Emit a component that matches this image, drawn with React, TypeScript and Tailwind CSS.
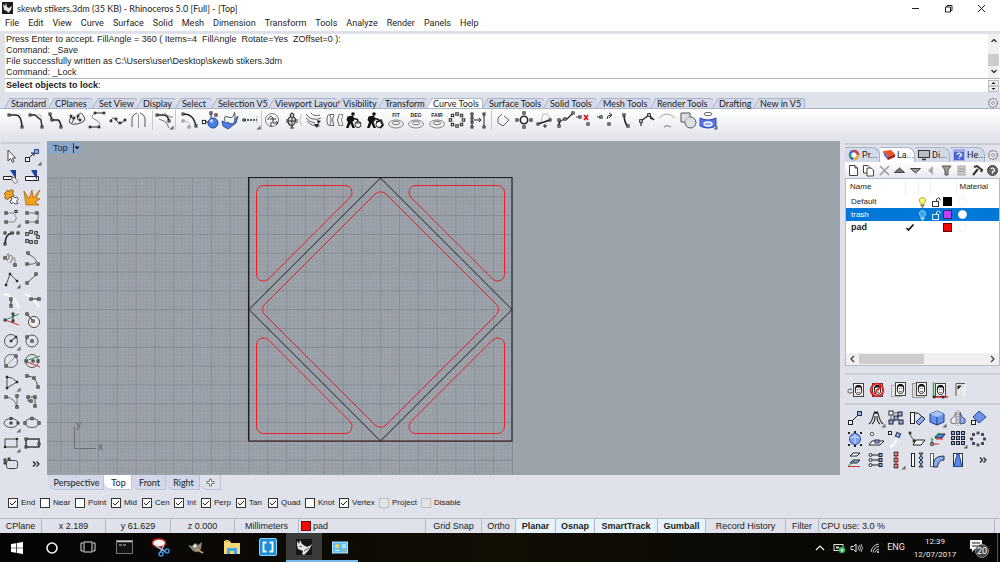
import { useState } from "react";
import type { ReactNode } from "react";

const INK = "#222222";

function P({ d, s = INK, w = 1, f = "none", dash }: { d: string; s?: string; w?: number; f?: string; dash?: string }) {
  return <path d={d} stroke={s} strokeWidth={w} fill={f} strokeDasharray={dash} strokeLinejoin="round" />;
}

function N({ at, s = INK, f = "#ffffff", r = 1.4 }: { at: number[][]; s?: string; f?: string; r?: number }) {
  return (
    <>
      {at.map(([x, y]) => (
        <rect key={x + "," + y} x={x - r} y={y - r} width={r * 2} height={r * 2} fill={f} stroke={s} strokeWidth={1} />
      ))}
    </>
  );
}

const Corner = () => <path d="M19.5 15.5V19.5H15.5Z" fill="#666" />;
const BLUE = "#8fa9f2";

function Walker({ seat }: { seat: boolean }) {
  return (
    <>
      <circle cx="9" cy="4" r="1.800" fill="#111" />
      <path d="M3.500 6.500 9 5.500 10.500 10 8.500 12 11 18H8.500L6.500 13.500 4.500 18H2L4 12 2.500 10Z" fill="#111" />
      <P d="M8 8 13.500 9.500 14 12" w={1.4} s="#111" />
      <circle cx="14" cy="14.500" r="3" fill="#fff" stroke="#222" />
      <P d={seat ? "M11 12 16 10 18 15 15 18" : "M12 13H17"} w={seat ? 1.8 : 1} />
    </>
  );
}

function Disc({ label }: { label: string }) {
  return (
    <>
      <text x="10" y="7" textAnchor="middle" className="fill-neutral-800 font-['Liberation_Sans'] text-[5px] font-bold">
        {label}
      </text>
      <ellipse cx="10" cy="14" rx="7.500" ry="4" fill="#e8eaee" stroke="#888" />
      <ellipse cx="10" cy="13" rx="3.500" ry="1.600" fill="#fff" stroke="#777" />
    </>
  );
}

type Tool = { name: string; art: ReactNode };

const curveA: Tool[] = [
  { name: "Fillet curves", art: <><P d="M4 5H11Q16 5 17 16" w={1.6} /><N at={[[4, 5], [17, 17]]} r={1} /></> },
  { name: "Chamfer curves", art: <><P d="M3 5H9L15 10 16 17" w={1.4} /><P d="M10 5H15V9" s="#aaa" w={0.7} /><N at={[[4, 5], [16, 17]]} r={1} /></> },
  { name: "Connect curves", art: <><P d="M4 4 6 10H12Q14 11 15 16" w={1.5} /><N at={[[4, 4], [6, 10], [15, 17]]} r={1} /></> },
  { name: "Blend curves", art: <><P d="M4 7Q1 11 3 13T10 14 17 11 16 5 11 6 13 9M4 7Q8 9 5 13" s="#444" /><N at={[[4, 6], [7, 8], [11, 6], [13, 10]]} r={0.8} /></> },
  { name: "Adjustable blend", art: <><P d="M8 3H17M3 17H12" /><P d="M8 3Q2 7 8 9.500T12 17" s="#888" /><N at={[[8, 3], [17, 3], [3, 17], [12, 17]]} r={0.8} /></> },
  { name: "Arc blend", art: <><P d="M3 10Q6 6 8 10T13 13 17 9" s="#444" /><N at={[[3, 11], [8, 9], [12, 13], [17, 10]]} r={0.8} /></> },
  { name: "Symmetry", art: <><P d="M4 17V8Q5 4 9 3M12 3Q16 4 17 8V17" s="#555" /><P d="M10.500 4V18" s="#999" /></> },
];
const curveB: Tool[] = [
  { name: "Offset curve", art: <><P d="M2 5H9Q14 5 15 11" w={1.6} /><P d="M5 9 12 12 15 18M10 3 16 7H19" s="#777" /><N at={[[3, 5], [15, 11]]} r={1} /><Corner /></> },
];
const curveC: Tool[] = [
  { name: "Offset normal", art: <><P d="M3 4Q15 3 17 17" w={1.4} /><P d="M4 11Q10 10 11 17" s="#999" dash="2 1" /><N at={[[4, 4], [17, 16]]} r={1} /><N at={[[4, 11], [10, 17]]} s="#888" r={1} /></> },
  { name: "Curve from objects", art: <><circle cx="13" cy="13" r="5" fill="#4e7fe0" stroke="#2346a0" /><circle cx="11.500" cy="11" r="1.800" fill="#bcd2ff" /><P d="M3 12H8M11 4V8" /><N at={[[11, 3], [16, 5]]} r={1.1} /><N at={[[4, 12]]} r={1.6} /></> },
  { name: "Curve on surface", art: <><path d="M2 11 7 13Q14 12 18 6L16 13 8 19 3 16Z" fill="#4e7fe0" stroke="#2c4fae" /><P d="M5 11Q3 5 8 7T14 4 15 8 7 12" s="#555" f="#eef2fb" /></> },
  { name: "Extend curve", art: <><P d="M3 10H16" w={1.5} dash="2 1" /><N at={[[3, 10]]} r={1} /><P d="M16 6V14" s="#999" dash="1 1" /><Corner /></> },
];
const curveD: Tool[] = [
  { name: "Revolve curve", art: <><circle cx="10" cy="10" r="6.500" fill="#f4f5f7" stroke="#777" /><P d="M6 10Q8 4 11 8V13M11 13H16M14 11 16 13 14 15M9 12V17M8 9H14" s="#333" /></> },
  { name: "Cross-section", art: <><path d="M9 3Q12 5 10 7 13 8 12.500 11T9 16Q5 15 5 11T8 7Q6 5 9 3Z" fill="#d0d2d6" stroke="#333" strokeWidth="1.200" /><P d="M4 9V13M14 9V13M5 11H13M9 7V18M7 18H11" s="#333" /><P d="M19 4Q15 10 19 16" s="#bbb" /></> },
  { name: "Pull curve", art: <><P d="M3 4Q5 8 10 9T18 8M3 8Q6 12 12 13M4 11Q9 17 17 16M8 3Q11 7 17 5" s="#666" /><path d="M11 14 16 14 14 18ZM14 10 18 11 15 14Z" fill="#222" /></> },
  { name: "Tween curves", art: <><ellipse cx="5" cy="10" rx="2" ry="5.500" fill="none" stroke="#666" /><P d="M6 4.500H10Q7 10 10 15.500H6M15 4.500Q12 10 15 15.500" s="#666" /><P d="M19 4.500Q16 10 19 15.500M15 4.500H19M15 15.500H19" s="#888" /></> },
  { name: "Rebuild curve", art: <Walker seat={false} /> },
  { name: "Rebuild with master", art: <Walker seat /> },
  { name: "Fit curve", art: <Disc label="FIT" /> },
  { name: "Change degree", art: <Disc label="DEG" /> },
  { name: "Fair curve", art: <Disc label="FAIR" /> },
  { name: "Make periodic", art: <N at={[[10, 4], [14.5, 5.5], [16.5, 10], [14.5, 14.5], [10, 16], [5.5, 14.5], [3.5, 10], [5.5, 5.5]]} r={1.2} /> },
  { name: "Simplify curve", art: <><P d="M4 4V17M16 3V17M6 10H13M11 8 13 10 11 12" /><N at={[[4, 4], [4, 8], [4, 12], [4, 17], [16, 4], [16, 17]]} r={1} /></> },
];
const curveE: Tool[] = [
  { name: "Close curve", art: <P d="M9 4 5 8V13L10 16 16 10 11 6" s="#666" /> },
  { name: "Control points", art: <><circle cx="10" cy="10" r="3.700" fill="none" stroke="#222" strokeWidth="1.500" /><N at={[[10, 3], [10, 17], [3, 10], [17, 10]]} r={1.1} /></> },
  { name: "Insert kink", art: <><P d="M7 12 9 4H13L17 9" s="#bbb" /><P d="M4 14 16 10" w={1.6} /><N at={[[4, 14], [16, 10]]} r={1} /><P d="M9 16H13M11 14V18" /></> },
  { name: "Handlebar editor", art: <><P d="M4 16Q4 9 12 9L17 4M4 16V9" w={1.2} /><N at={[[4, 16], [4, 10], [10, 9], [18, 3]]} r={1.1} /></> },
  { name: "Remove knot", art: <><P d="M1 7H4" s="#555" /><P d="M9 5 13 10M13 5 9 10" s="#e01010" w={1.6} /><N at={[[5, 7], [13, 14]]} r={1.1} /></> },
  { name: "Insert knot", art: <><P d="M1 7H4M11 9Q11 5 15 5M13 3 16 5 13 8" s="#333" /><N at={[[5, 7], [13, 14]]} r={1.1} /></> },
  { name: "Line to curve", art: <><P d="M8 4Q8 12 12 17" w={1.6} /><N at={[[8, 5], [12, 16]]} r={1.1} /></> },
  { name: "Polyline edit", art: <><P d="M4 16V11L12 5 17 10" w={1.2} /><N at={[[4, 11], [12, 5]]} r={1.3} /><path d="M13 6 18 10 13 9Z" fill="#333" /></> },
  { name: "Curve arch", art: <><P d="M2 8Q10 0 18 8" s="#aaa" /><P d="M7 17Q10 14 14 17" s="#777" /></> },
  { name: "Curve boolean", art: <><path d="M3 3H12V7A5.500 5.500 0 1 1 7 12H3Z" fill="#dcdfe3" stroke="#555" /><path d="M12 7A5.500 5.500 0 0 0 7 12" fill="none" stroke="#aaa" /></> },
  { name: "Extract isocurve", art: <><ellipse cx="10" cy="4" rx="4" ry="1.600" fill="#fff" stroke="#666" /><path d="M2 8Q10 12 18 8V16Q10 20 2 16Z" fill="#5b78e8" stroke="#2b46b5" /><ellipse cx="10" cy="14" rx="4" ry="2" fill="#8da6f5" stroke="#fff" strokeWidth="1.300" /><Corner /></> },
];

const side: Tool[] = [
  { name: "Select", art: <path d="M7 4V15L9.500 12.500 11.500 16.500 13 15.500 11.500 12H14.500Z" fill="#fff" stroke="#444" /> },
  { name: "Points on", art: <><P d="M7 12 12 7M9 7H12V10" /><rect x="3.500" y="11.500" width="4" height="4" fill="#fff" stroke="#222" /><rect x="12.500" y="3.500" width="4" height="4" fill="#8cb0ee" stroke="#2a4b8f" /><Corner /></> },
  { name: "Trim", art: <><path d="M9 3H15V12Z" fill="#1d3fa0" /><path d="M2.500 9.500H11V12.500H2.500Z" fill="#fff" stroke="#222" /><path d="M10 12 14 16.500 17 14.500 13 10Z" fill="#eee" stroke="#777" /></> },
  { name: "Split", art: <><path d="M3.500 9.500H16.500V13.500H3.500Z" fill="#fff" stroke="#222" /><path d="M9 3H15V13Z" fill="#1d3fa0" /></> },
  { name: "Join", art: <><path d="M5 5 7 3 8.500 5 10 2.500 12.500 4 11.500 7 13 8 11 11 9 10 7 12.500 3.500 11 5 9 3 7Z" fill="#f6a21c" stroke="#94600a" /><path d="M10 10 12 9 13.500 11 16 10 17 12.500 15.500 14 17 16.500 14 17 12.500 15.500 10 16.500 9 14 11 13Z" fill="#fff" stroke="#555" /></> },
  { name: "Explode", art: <path d="M4 18 2 4 7 12 10 3 11 11 18 3 14 11 18 12 13 15 17 18Z" fill="#f6a21c" stroke="#a15a08" strokeWidth="0.700" /> },
  { name: "Control point curve", art: <><P d="M5 5H12Q18 10 13 14H5" s="#888" /><N at={[[5, 5], [15, 3.5], [5, 14]]} r={1.1} /><Corner /></> },
  { name: "Interpolate curve", art: <><P d="M5 5H14M5 14H14Q18 10 15 5" s="#777" /><N at={[[5, 5], [15, 5], [5, 14], [15, 14]]} r={1.1} /></> },
  { name: "Handle curve", art: <><P d="M4 17Q4 6 11 5H13" w={1.5} /><N at={[[4, 5], [11, 5], [17, 5], [4, 16]]} r={1} /></> },
  { name: "Sketch", art: <N at={[[5, 6], [9, 4], [14, 5], [16, 9], [14, 14], [9, 14], [5, 13]]} r={1.3} /> },
  { name: "Helix", art: <><P d="M5 9Q7 2 8 6T6 12Q9 4 11 7T9 14Q13 6 14 10T12 16" s="#888" /><N at={[[4, 9], [14, 16]]} r={1.1} /></> },
  { name: "Conic", art: <><P d="M6 5Q16 10 14 13T5 15" s="#666" /><N at={[[6, 4], [5, 15], [16, 15]]} r={1.1} /></> },
  { name: "Polyline", art: <><P d="M5 16 9 5 16 12" s="#555" /><N at={[[5, 16], [9, 5], [16, 12]]} r={0.7} /><Corner /></> },
  { name: "Line", art: <><P d="M6 13 14 6" s="#555" /><N at={[[5, 14], [14, 5]]} r={1.1} /></> },
  { name: "Perpendicular line", art: <><P d="M3 4Q14 6 18 18" s="#fff" w={2} /><P d="M10 9V16" /><N at={[[10, 9], [10, 16]]} r={1.1} /></> },
  { name: "Tangent line", art: <><P d="M3 4Q10 6 17 17" s="#fff" w={2} /><P d="M8 9H16" /><N at={[[9, 9], [17, 9]]} r={1.1} /></> },
  { name: "Line at angle", art: <><P d="M4 10 18 4" s="#1fa04a" /><P d="M4 10 18 15" s="#e02a2a" /><P d="M12 4V12" /><N at={[[4, 10], [12, 4], [12, 11]]} r={0.9} /></> },
  { name: "Circle with offset", art: <><circle cx="12" cy="12" r="5.500" fill="#f3f4f6" stroke="#444" /><P d="M5 4 10 10" /><N at={[[5, 4], [11, 11]]} r={1.1} /></> },
  { name: "Circle", art: <><circle cx="10" cy="10" r="6.500" fill="none" stroke="#555" /><P d="M10 10 15 6" /><N at={[[10, 10], [15, 6]]} r={0.7} /><Corner /></> },
  { name: "Circle from points", art: <><circle cx="10" cy="10" r="6" fill="none" stroke="#555" /><N at={[[5, 6], [10, 10]]} r={1.1} /></> },
  { name: "Circle diameter", art: <><circle cx="10" cy="10" r="6.500" fill="none" stroke="#666" /><P d="M5 15 15 5" s="#999" /><N at={[[5, 15], [15, 5]]} r={1.1} /></> },
  { name: "Tangent circle", art: <><circle cx="10" cy="10" r="6.500" fill="none" stroke="#555" /><P d="M3 10 18 5" s="#1fa04a" /><P d="M3 10 18 16" s="#e02a2a" /><N at={[[4, 10], [11, 10], [16, 10]]} r={1} /></> },
  { name: "Arc", art: <><P d="M6 17V5Q12 5 16 10L6 16" s="#555" /><N at={[[6, 5], [16, 10], [6, 16]]} r={0.7} /><Corner /></> },
  { name: "Arc through points", art: <><P d="M5 4Q14 4 16 15" s="#555" /><N at={[[5, 4], [12, 6], [16, 15]]} r={1.1} /></> },
  { name: "Tangent arc", art: <><P d="M5 5Q14 6 16 15M16 5V15" s="#777" /><N at={[[5, 5], [16, 4], [16, 15]]} r={1.1} /></> },
  { name: "Rectangle array", art: <><P d="M6 5H13V14M10 9H6V5" s="#555" /><N at={[[6, 5], [13, 5], [9, 9], [13, 14]]} r={1.1} /></> },
  { name: "Ellipse", art: <><ellipse cx="10" cy="10" rx="7" ry="4.500" fill="none" stroke="#555" /><N at={[[10, 5.5], [17, 10], [10, 10]]} r={0.9} /><Corner /></> },
  { name: "Ellipse diameter", art: <><ellipse cx="10" cy="10" rx="7" ry="4.500" fill="none" stroke="#555" /><N at={[[10, 5.5], [3, 10], [17, 10]]} r={1.1} /></> },
  { name: "Rectangle", art: <><rect x="4" y="6" width="12" height="8" fill="none" stroke="#444" /><N at={[[4, 14], [16, 6]]} r={0.6} /><Corner /></> },
  { name: "Rectangle from points", art: <><rect x="4" y="6" width="13" height="8" fill="none" stroke="#222" strokeWidth="1.300" /><N at={[[4, 6], [4, 14], [17, 11]]} r={1} /></> },
  { name: "Rounded rectangle", art: <><rect x="5.500" y="6.500" width="11" height="8" rx="2" fill="none" stroke="#444" /><N at={[[4, 6], [8, 5], [4, 9]]} r={0.9} /></> },
  { name: "More tools", art: <P d="M11 7.500 13.500 10 11 12.500M14.500 7.500 17 10 14.500 12.500" w={1.3} /> },
];

const Face = ({ x = 6, y = 3 }: { x?: number; y?: number }) => (
  <g transform={`translate(${x} ${y})`}>
    <rect x="0.500" y="0.500" width="10" height="13" fill="#f4f4f4" stroke="#444" />
    <ellipse cx="5.500" cy="7" rx="3.200" ry="4.500" fill="#fff" stroke="#222" />
    <path d="M2 7Q1.500 2 5.500 2T9 7L7.500 4.500H3.500Z" fill="#111" />
    <path d="M4.300 6V7M6.700 6V7M4 9Q5.500 10.500 7 9" stroke="#222" strokeWidth="0.800" fill="none" />
  </g>
);
const faces: Tool[] = [
  { name: "Hide", art: <><Face x={7} /><P d="M6 9Q1 9 2 12Q4 14 7 12" s="#888" w={1.3} /></> },
  { name: "Remove", art: <><Face x={5} /><circle cx="10" cy="10" r="6.300" fill="none" stroke="#ee1c1c" strokeWidth="1.800" /><P d="M6 15 15 5" s="#ee1c1c" w={1.8} /></> },
  { name: "Show", art: <><rect x="3.500" y="5.500" width="10" height="11" fill="#e3e5e9" stroke="#aaa" /><Face x={7} y={2} /></> },
  { name: "Show selected", art: <><rect x="3.500" y="3.500" width="12" height="14" fill="#d5d7db" stroke="#999" /><Face x={7} y={2} /></> },
  { name: "Isolate", art: <><Face x={5} /><P d="M3.500 2V17" s="#28b428" w={1.4} /><P d="M4 17H18" s="#e02020" w={1.4} /><N at={[[4, 17], [13, 17]]} r={0.8} /></> },
  { name: "Ghost", art: <><rect x="5" y="3" width="10" height="13" fill="#eceef2" /><P d="M5 16V3.500H14" s="#555" /><path d="M7 15V7Q8 4 12 5L10 9V15Z" fill="#fff" stroke="#ccc" /><P d="M7 6H10L7 9Z" f="#222" /></> },
];

const transforms: Tool[] = [
  { name: "Move", art: <><P d="M7 13 13 7" /><rect x="3.500" y="12.500" width="4" height="4" fill="#fff" stroke="#222" /><rect x="12.500" y="3.500" width="4" height="4" fill={BLUE} stroke="#234" /></> },
  { name: "Bend", art: <><P d="M3 16Q6 14 8 5H12Q14 14 17 16M6 16Q9 14 9 8M14 16Q11 14 11 8" w={1.1} /><P d="M8 4.500H12" w={2} /><Corner /></> },
  { name: "Copy", art: <><P d="M5 8V13H9M8 5H12" s="#555" /><N at={[[5, 5]]} r={2} /><N at={[[14, 6], [15, 14], [10, 10], [5, 14]]} f={BLUE} r={2} /></> },
  { name: "Rotate", art: <><rect x="3.500" y="4.500" width="4" height="11" fill="#fff" stroke="#222" /><path d="M9 14 15 8 18 11 12 17Z" fill={BLUE} stroke="#234" /><P d="M8 5Q12 4 14 8" /></> },
  { name: "Scale", art: <><path d="M3 6 10 3 17 6V14L10 17 3 14Z" fill="#6b92e8" stroke="#1d3a80" /><path d="M3 6 10 3 17 6 10 9Z" fill="#a9c4ff" /><P d="M10 9V17" s="#1d3a80" /><Corner /></> },
  { name: "Mirror", art: <><path d="M8 4V16L3 15V11L6 9Z" fill="#eee" stroke="#777" /><path d="M12 4V16L17 15V11L14 9Z" fill={BLUE} stroke="#456" /><P d="M10 2V18" s="#888" dash="2 1" /></> },
  { name: "Orient", art: <><path d="M11 3 18 9 11 15 5 9Z" fill="#6f93e6" stroke="#234a8f" /><rect x="3.500" y="12.500" width="4" height="4" fill="#fff" stroke="#222" /></> },
  { name: "Cage edit", art: <><circle cx="10" cy="10" r="5.500" fill="#7fa3ee" stroke="#2a4b9f" /><P d="M5 9Q10 6 15 9M10 5V15" s="#d4e1ff" /><N at={[[4, 4], [10, 3], [16, 4], [4, 16], [10, 17], [16, 16]]} r={0.5} /></> },
  { name: "Flow along surface", art: <><circle cx="6" cy="5" r="1.700" fill="#fff" stroke="#555" /><path d="M6 12H18L14 16H3Z" fill="#fff" stroke="#222" /><rect x="9" y="11" width="4" height="3" fill={BLUE} stroke="#234" /></> },
  { name: "Flow along curve", art: <><P d="M4 18Q11 15 12 3" s="#fff" w={2} /><N at={[[4, 4]]} r={1.5} /><rect x="10" y="4" width="4" height="4" fill={BLUE} stroke="#234" transform="rotate(25 12 6)" /></> },
  { name: "Project to plane", art: <><path d="M9 11H18L14 16H6Z" fill="#fff" stroke="#222" /><P d="M3 4Q4 10 8 11M8 11 6 12" s="#444" /><N at={[[3, 4], [7, 12]]} r={0.8} /></> },
  { name: "Remap plane", art: <><path d="M11 5H18L15 9H8Z" fill="#577fe0" stroke="#222" /><P d="M5 15V9M8 8 12 4" s="#1fa04a" w={1.4} /><P d="M5 15H12M9 10H16" s="#e02a2a" w={1.2} /><N at={[[5, 15]]} r={1.2} /></> },
  { name: "Rectangular array", art: <><N at={[[5, 4], [10, 4], [15, 4], [5, 9], [10, 9], [15, 9], [5, 14], [10, 14], [15, 14]]} f={BLUE} r={1.5} /><Corner /></> },
  { name: "Polar array", art: <N at={[[10, 4], [14.5, 5.5], [16.5, 10], [14.5, 14.5], [10, 16], [5.5, 14.5], [3.5, 10], [5.5, 5.5]]} f="#d5e0ff" r={0.9} s="#334" /> },
  { name: "Set plane", art: <><path d="M8 3H15L12 6H5Z" fill="#fff" stroke="#222" /><path d="M8 10H15L12 13H5Z" fill={BLUE} stroke="#222" /><P d="M3 16 11 10" s="#1fa04a" /><P d="M3 16.500H15" s="#e02a2a" /></> },
  { name: "Align points", art: <>{[5, 10, 15].map((y) => <g key={y}><P d={`M5 ${y}H15`} /><circle cx="4.500" cy={y} r="1.500" fill="#fff" stroke="#222" /><rect x="13" y={y - 1.5} width="3" height="3" fill={BLUE} stroke="#222" /></g>)}</> },
  { name: "Align objects", art: <><N at={[[10, 4], [10, 10], [10, 16]]} r={1.8} /><P d="M10 2V18" s="#e02a2a" w={1.3} /><Corner /></> },
  { name: "Twist", art: <><rect x="4.500" y="3.500" width="3" height="13" fill="#fff" stroke="#222" /><path d="M12 3H16L12 8 16 12 12 17H16L12 12 16 8Z" fill={BLUE} stroke="#234" /></> },
  { name: "Pipe bend", art: <><rect x="3.500" y="3.500" width="3" height="13" fill="#fff" stroke="#666" /><path d="M6.500 17V13Q7 6 17 6V10Q11 10 10.500 17Z" fill={BLUE} stroke="#234" /></> },
  { name: "Taper", art: <><rect x="5.500" y="3.500" width="9" height="13" fill="#fff" stroke="#333" /><path d="M9 4H11L14 16.500H6Z" fill="#5b86e8" stroke="#234a9f" /></> },
  { name: "More transforms", art: <P d="M12 7.500 14.500 10 12 12.500M15.500 7.500 18 10 15.500 12.500" w={1.3} /> },
];

function ToolButton({ tool }: { tool: Tool }) {
  return (
    <button type="button" aria-label={tool.name} className="flex h-5 w-5 shrink-0 items-center justify-center">
      <svg width="20" height="20" viewBox="0 0 20 20" aria-hidden="true">{tool.art}</svg>
    </button>
  );
}

function ToolGroup({ tools, width }: { tools: Tool[]; width: string }) {
  return <div className={"flex shrink-0 justify-between " + width}>{tools.map((t) => <ToolButton key={t.name} tool={t} />)}</div>;
}

const Rule = () => <div className="h-5 w-px shrink-0 bg-[#c3c7cf]" />;

const Gear = () => (
  <svg width="12" height="12" viewBox="0 0 12 12" aria-hidden="true">
    <circle cx="6" cy="6" r="4.300" fill="#eceef2" stroke="#8b8e94" strokeWidth="1.600" strokeDasharray="1.900 0.800" />
    <circle cx="6" cy="6" r="1.500" fill="none" stroke="#999" />
  </svg>
);

const menus = ["File", "Edit", "View", "Curve", "Surface", "Solid", "Mesh", "Dimension", "Transform", "Tools", "Analyze", "Render", "Panels", "Help"];

const tabs = [
  ["Standard", "w-[44px]"], ["CPlanes", "w-[44px]"], ["Set View", "w-[44px]"], ["Display", "w-[39px]"],
  ["Select", "w-[36px]"], ["Selection V5", "w-[57px]"], ["Viewport Layout", "w-[68px]"], ["Visibility", "w-[42px]"],
  ["Transform", "w-[48px]"], ["Curve Tools", "w-[56px]"], ["Surface Tools", "w-[61px]"], ["Solid Tools", "w-[53px]"],
  ["Mesh Tools", "w-[54px]"], ["Render Tools", "w-[62px]"], ["Drafting", "w-[41px]"], ["New in V5", "w-[51px]"],
];

function ToolbarTabs() {
  const [active, setActive] = useState("Curve Tools");
  return (
    <div className="flex h-[11px] items-stretch border-b border-[#a9b3c6] pl-[5px] font-['Lato',sans-serif] text-[9px]">
      {tabs.map(([name, width]) => {
        const on = name === active;
        const face = on ? "bg-white border-[#a9b3c6]" : "bg-[#d3d9e8] border-[#a9b3c6]";
        return (
          <button key={name} type="button" onClick={() => setActive(name)} className={"relative flex shrink-0 items-center pl-[6px] text-left " + width}>
            <span className={"absolute inset-y-0 left-[2px] w-2 -skew-x-[30deg] border-t border-l " + face} />
            <span className={"absolute inset-y-0 right-0 left-2 rounded-tr-[3px] border-t " + (on || name === "New in V5" ? "border-r " : "") + face} />
            <span className="relative whitespace-nowrap">{name}</span>
          </button>
        );
      })}
      <button type="button" aria-label="Toolbar options" className="mr-[1px] ml-auto flex items-center"><Gear /></button>
    </div>
  );
}

function Grid() {
  const step = 18.814;
  const lines: ReactNode[] = [];
  for (let i = -54; i <= 70; i++) {
    const x = 249 + (i * step) / 5;
    if (x < 47) continue;
    const major = i % 5 === 0;
    lines.push(<path key={"v" + i} d={`M${x} 178V474`} stroke={major ? "#868c95" : "#959ba4"} strokeWidth={major ? 1 : 0.6} />);
  }
  for (let j = 0; j <= 78; j++) {
    const y = 178 + (j * step) / 5;
    const major = j % 5 === 0;
    lines.push(<path key={"h" + j} d={`M47 ${y}H512`} stroke={major ? "#868c95" : "#959ba4"} strokeWidth={major ? 1 : 0.6} />);
  }
  return <g>{lines}</g>;
}

const WEDGE = "M256.500 192.500A7 7 0 0 1 263.500 185.500H345A7 7 0 0 1 350 197.500L268.500 279A7 7 0 0 1 256.500 274Z";

function Viewport() {
  return (
    <main className="relative min-w-0 flex-1 overflow-hidden bg-[#9da3ab]">
      <svg className="absolute top-0 left-0" width="793" height="333" viewBox="47 141 793 333" role="img" aria-label="Top view drawing">
        <Grid />
        <g fill="none" stroke="#ee1f24" strokeWidth="1">
          <path d={WEDGE} />
          <path d={WEDGE} transform="translate(761 0) scale(-1 1)" />
          <path d={WEDGE} transform="translate(0 619) scale(1 -1)" />
          <path d={WEDGE} transform="translate(761 619) scale(-1 -1)" />
          <path d="M375 194A8 8 0 0 1 386 194L496.500 304.500A8 8 0 0 1 496.500 314.500L386 425A8 8 0 0 1 375 425L264.500 314.500A8 8 0 0 1 264.500 304.500Z" />
        </g>
        <g fill="none" stroke="#1c1e21">
          <path d="M248.500 177.500H512V441H248.500Z" strokeWidth="1.100" />
          <path d="M380.500 178 512 309.500 380.500 441 249 309.500Z" />
          <path d="M249.500 178V440" stroke="#2f5a35" strokeWidth="0.600" />
          <path d="M249 441.500H512" stroke="#6a2226" strokeWidth="0.600" />
        </g>
        <path d="M74.500 427V448.500H96" fill="none" stroke="#6b6f76" />
        <text x="76" y="428" className="fill-[#5f636a] font-['Liberation_Sans'] text-[10px]">y</text>
        <text x="98" y="450" className="fill-[#5f636a] font-['Liberation_Sans'] text-[10px]">x</text>
      </svg>
      <button type="button" className="absolute top-px left-px flex h-3 items-center gap-[5px] bg-[#8ba6c8] pr-px pl-[5px] font-['Liberation_Sans',sans-serif] text-[9px] text-[#1b2a3c]">
        Top
        <svg width="7" height="12" viewBox="0 0 7 12" aria-hidden="true"><path d="M0.500 1V11" stroke="#333" /><path d="M1.500 4.500H6.500L4 7.500Z" fill="#111" /></svg>
      </button>
    </main>
  );
}

const panelTabs: { name: string; on?: boolean; art: ReactNode }[] = [
  { name: "Pr...", art: <><circle cx="6" cy="6" r="4" fill="#fff" stroke="#3a62d8" strokeWidth="2.400" /><path d="M6 2A4 4 0 0 1 10 6" stroke="#e33a2c" strokeWidth="2.400" fill="none" /><path d="M10 6A4 4 0 0 1 5 10" stroke="#f2b72a" strokeWidth="2.400" fill="none" /><path d="M3 8.500A4 4 0 0 1 2 5" stroke="#35a852" strokeWidth="2.400" fill="none" /></> },
  { name: "La...", on: true, art: <><path d="M0 2 8 1 12 5 5 8Z" fill="#ee5522" /><path d="M0 2 5 8V11L1 6Z" fill="#3d63c8" /><path d="M5 8 12 5V8L5 11Z" fill="#a32222" /></> },
  { name: "Di...", art: <><rect x="0.500" y="1.500" width="11" height="7" fill="#b9bfc9" stroke="#333" /><path d="M4 10.500H8" stroke="#333" strokeWidth="1.500" /></> },
  { name: "He...", art: <><rect x="0.500" y="0.500" width="11" height="11" fill="#4a64d4" stroke="#a8b6e8" /><path d="M1 2H11" stroke="#dfe6ff" /><path d="M4 5.500Q6 3 8 5T6 7.500M6 9V10" stroke="#fff" strokeWidth="1.300" fill="none" /></> },
];

const layerTools: Tool[] = [
  { name: "New layer", art: <path d="M2.500 1.500H8L10.500 4V11.500H2.500ZM8 1.500V4H10.500" fill="#fff" stroke="#444" /> },
  { name: "New sublayer", art: <><path d="M1.500 1.500H6L8 3.500V9H1.500Z" fill="#fff" stroke="#444" /><path d="M5 4H9L11.500 6V12H5Z" fill="#fff" stroke="#444" /></> },
  { name: "Delete layer", art: <path d="M2 2 11 11M11 2 2 11" stroke="#999" strokeWidth="1.500" /> },
  { name: "Move up", art: <path d="M6.500 4 11.500 8.500H1.500Z" fill="#777" stroke="#444" /> },
  { name: "Move down", art: <path d="M6.500 9 11.500 4.500H1.500Z" fill="#999" stroke="#444" /> },
  { name: "Move out", art: <path d="M9 2V11L4 6.500Z" fill="#aaa" /> },
  { name: "Filter", art: <path d="M2 2H11L8 6V11H5V6Z" fill="#999" stroke="#555" /> },
  { name: "Properties", art: <><rect x="3" y="2" width="7" height="9" fill="#ccc" stroke="#aaa" /><path d="M4 5H9M4 7.500H9" stroke="#999" /></> },
  { name: "Layer tools", art: <path d="M2 11 7 5M3 3 6 2 11 6 10 8" stroke="#333" strokeWidth="2" fill="none" /> },
  { name: "Help", art: <><circle cx="6.500" cy="6.500" r="5" fill="#666" stroke="#444" /><path d="M5 5Q6.500 3 8 5T6.500 7.500V9.500" stroke="#fff" strokeWidth="1.200" fill="none" /></> },
];

function Bulb({ lit }: { lit: boolean }) {
  return (
    <svg width="9" height="12" viewBox="0 0 9 12" aria-hidden="true">
      <path d="M3 7.500Q1 6 1.500 3.500 2.500 1.500 4.500 1.500T7.500 3.500Q8 6 6 7.500V10H3Z" fill={lit ? "#fff86a" : "#3ba0f0"} stroke={lit ? "#8a862a" : "#bfe0ff"} strokeWidth="0.800" />
      <path d="M3 9H6M3.500 11H5.500" stroke={lit ? "#555" : "#cde"} />
    </svg>
  );
}

function Lock({ color }: { color: string }) {
  return (
    <svg width="10" height="12" viewBox="0 0 10 12" aria-hidden="true">
      <rect x="1.500" y="5.500" width="6" height="5" fill="none" stroke={color} />
      <path d="M5.500 5V3Q7.500 0.500 9 3V4.500" fill="none" stroke={color} />
    </svg>
  );
}

const layers = [
  { name: "Default", swatch: "bg-black", bulb: true, icons: true, current: false, selected: false },
  { name: "trash", swatch: "bg-[#c040f8]", bulb: false, icons: true, current: false, selected: true },
  { name: "pad", swatch: "bg-[#f60505]", bulb: false, icons: false, current: true, selected: false },
];

function Layers() {
  return (
    <div className="flex min-h-0 flex-1 flex-col border border-[#b5bac4] bg-white">
      <table className="w-full table-fixed border-collapse font-['Liberation_Sans',sans-serif] text-[8px]">
        <colgroup>
          <col className="w-[59px]" /><col className="w-[13px]" /><col className="w-[12px]" /><col className="w-[13px]" /><col className="w-[13px]" /><col />
        </colgroup>
        <thead>
          <tr className="h-4 text-left">
            <th className="p-0 pl-[4px] font-normal">Name</th>
            <th className="border-x border-[#eceef0] p-0" /><th className="border-r border-[#eceef0] p-0" /><th className="p-0" />
            <th className="border-r border-[#eceef0] p-0" />
            <th className="p-0 pl-[3px] font-normal">Material</th>
          </tr>
        </thead>
        <tbody>
          {layers.map((l) => (
            <tr key={l.name} className={"h-[13px] leading-none " + (l.selected ? "bg-[#0078d7] text-white" : "")}>
              <td className={"p-0 pl-[5px] " + (l.current ? "text-[9px] font-bold" : "")}>{l.name}</td>
              <td className="p-0">{l.current && <svg width="10" height="9" viewBox="0 0 10 9" aria-label="Current"><path d="M1.500 5 3.500 7 8.500 1.500" fill="none" stroke="#111" strokeWidth="1.600" /></svg>}</td>
              <td className="p-0">{l.icons && <Bulb lit={l.bulb} />}</td>
              <td className="p-0 pl-px">{l.icons && <Lock color={l.selected ? "#dceeff" : "#333333"} />}</td>
              <td className="p-0"><div className={"h-[9px] w-[9px] border border-black/60 " + l.swatch} /></td>
              <td className="p-0 pl-[2px]"><div className={"h-[9px] w-[9px] rounded-full border border-[#eef0f2] bg-white"} /></td>
            </tr>
          ))}
        </tbody>
      </table>
      <div className="mt-auto flex h-3 items-center bg-[#f0f0f0] px-1">
        <svg width="5" height="8" viewBox="0 0 5 8" aria-hidden="true"><P d="M4 1 1 4 4 7" s="#444" w={1.4} /></svg>
        <div className="ml-[4px] h-[10px] w-[65px] bg-[#cdcdcd]" />
        <svg className="ml-auto" width="5" height="8" viewBox="0 0 5 8" aria-hidden="true"><P d="M1 1 4 4 1 7" s="#444" w={1.4} /></svg>
      </div>
    </div>
  );
}

function RightPanel() {
  return (
    <aside className="flex w-[160px] shrink-0 flex-col pl-[5px]">
      <div className="mt-[2px] h-[2px] bg-[#c9cdd6]" />
      <div className="mt-[2px] flex h-[15px] items-stretch">
        {panelTabs.map((t) => (
          <button key={t.name} type="button" className={"flex w-[35px] items-center gap-[2px] rounded-tr-lg border-t border-r border-[#a9b3c6] pl-[3px] text-[9px] " + (t.on ? "bg-white" : "bg-[#d3d9e8]")}>
            <svg className="shrink-0" width="12" height="12" viewBox="0 0 12 12" aria-hidden="true">{t.art}</svg>
            <span>{t.name}</span>
          </button>
        ))}
        <button type="button" aria-label="Panel options" className="ml-[2px] flex items-center"><Gear /></button>
      </div>
      <div className="flex h-4 items-center justify-between bg-gradient-to-b from-white to-[#e6e9ef] pr-px pl-[2px]">
        {layerTools.map((t) => (
          <button key={t.name} type="button" aria-label={t.name}><svg width="13" height="13" viewBox="0 0 13 13" aria-hidden="true">{t.art}</svg></button>
        ))}
      </div>
      <Layers />
      <div className="mt-[7px] h-[2px] bg-[#c9cdd6]" />
      <div className="mt-[2px] flex h-[26px] items-center gap-px pl-px">{faces.map((t) => <ToolButton key={t.name} tool={t} />)}</div>
      <div className="h-[2px] bg-[#c9cdd6]" />
      <div className="mt-[3px] mb-[5px] grid w-[144px] grid-cols-7 gap-y-px">{transforms.map((t) => <ToolButton key={t.name} tool={t} />)}</div>
    </aside>
  );
}

const snaps: [string, string, boolean, boolean][] = [
  ["End", "w-[32px]", true, false], ["Near", "w-[35px]", false, false], ["Point", "w-[36px]", false, false], ["Mid", "w-[31px]", true, false],
  ["Cen", "w-[32px]", true, false], ["Int", "w-[27px]", true, false], ["Perp", "w-[35px]", true, false], ["Tan", "w-[32px]", true, false],
  ["Quad", "w-[37px]", true, false], ["Knot", "w-[34px]", false, false], ["Vertex", "w-[40px]", true, false], ["Project", "w-[42px]", false, true],
  ["Disable", "w-[42px]", false, true],
];

function Osnaps() {
  return (
    <div className="flex h-[27px] items-center pb-[4px] pl-[8px] font-['Liberation_Sans',sans-serif]">
      {snaps.map(([name, width, on, dim]) => (
        <label key={name} className={"relative flex shrink-0 items-center gap-[3px] " + width}>
          <input type="checkbox" defaultChecked={on} className={"peer h-[10px] w-[10px] shrink-0 appearance-none border " + (dim ? "border-[#c0c0c0] bg-[#e4e4e6]" : "border-[#333] bg-white")} />
          <svg className="pointer-events-none absolute left-0 hidden peer-checked:block" width="10" height="10" viewBox="0 0 10 10" aria-hidden="true"><path d="M2 5 4 7 8 3" fill="none" stroke="#222" /></svg>
          <span>{name}</span>
        </label>
      ))}
    </div>
  );
}

const viewTabs = [["Perspective", "w-[56px]"], ["Top", "w-[28px]"], ["Front", "w-[34px]"], ["Right", "w-[34px]"]];

const cells: [string, string, boolean][] = [
  ["Grid Snap", "w-[56px]", false], ["Ortho", "w-[34px]", false], ["Planar", "w-[40px]", true], ["Osnap", "w-[39px]", true],
  ["SmartTrack", "w-[63px]", true], ["Gumball", "w-[48px]", true], ["Record History", "w-[80px]", false], ["Filter", "w-[33px]", false],
];

function StatusBar() {
  const cell = "flex shrink-0 items-center justify-center border-r border-[#b3b8c2] whitespace-nowrap ";
  return (
    <footer className="flex h-[15px] border-t border-[#b3b8c2] font-['Liberation_Sans',sans-serif] text-[9px]">
      <div className={cell + "w-[42px]"}>CPlane</div>
      <div className={cell + "w-[64px]"}>x 2.189</div>
      <div className={cell + "w-[65px]"}>y 61.629</div>
      <div className={cell + "w-[64px]"}>z 0.000</div>
      <div className={cell + "w-[64px]"}>Millimeters</div>
      <button type="button" className="flex w-[127px] items-center gap-[2px] border-r border-[#b3b8c2] pl-[2px]">
        <span className="h-[10px] w-[10px] border border-[#611] bg-[#f60505]" />pad
      </button>
      {cells.map(([name, width, on]) => (
        <button key={name} type="button" aria-pressed={on} className={cell + width + (on ? " bg-[#e6f3fc] font-bold" : "")}>{name}</button>
      ))}
      <div className="mr-[5px] flex flex-1 items-center border-r border-[#b3b8c2] pl-[2px]">CPU use: 3.0 %</div>
    </footer>
  );
}

const apps: { name: string; art: ReactNode }[] = [
  { name: "Task View", art: <><rect x="6" y="5" width="8" height="10" fill="none" stroke="#ddd" /><path d="M5 6H3V14H5M15 6H17V14H15" fill="none" stroke="#ddd" /></> },
  { name: "Command Prompt", art: <><rect x="2.500" y="3.500" width="16" height="13" fill="#111" stroke="#777" /><path d="M3 4.500H18" stroke="#ccc" strokeWidth="1.500" /><path d="M5 8H8M9 8H12" stroke="#ccc" /></> },
  { name: "Snipping Tool", art: <><ellipse cx="9" cy="6" rx="6.500" ry="4" fill="#f6f6f6" stroke="#d22" strokeWidth="1.300" /><path d="M6 9 16 15M14 8 10 16" stroke="#9fb6cf" strokeWidth="1.500" /><circle cx="17" cy="14" r="2" fill="none" stroke="#3b8fd8" strokeWidth="1.500" /><circle cx="11" cy="17" r="2" fill="none" stroke="#3b8fd8" strokeWidth="1.500" /></> },
  { name: "GIMP", art: <><path d="M2 8 6 9Q9 4 12 8L16 5 15 12Q12 17 7 14Z" fill="#8b8578" /><circle cx="9" cy="9" r="1.500" fill="#fff" /><path d="M10 12 17 16" stroke="#c9a46b" strokeWidth="1.500" /></> },
  { name: "File Explorer", art: <><path d="M2 4H8L9 6H18V17H2Z" fill="#f7d774" /><path d="M3 3H7V5H3Z" fill="#e9b93c" /><path d="M5 17V11H15V17H12V14H8V17Z" fill="#3fa9e8" /></> },
  { name: "Brackets", art: <><rect x="1.500" y="1.500" width="17" height="17" rx="1.500" fill="#1d8fd6" stroke="#8bd0ff" /><path d="M8.500 5.500H5.500V14.500H8.500M11.500 5.500H14.500V14.500H11.500" fill="none" stroke="#fff" strokeWidth="1.800" /></> },
  { name: "Rhinoceros", art: <><path d="M2 2H18V18H2Z" fill="#161616" /><path d="M3 4 5 7 6 3 8 7 11 9Q14 11 18 7L15 13 10 18 8 17 9 14 4 12 3 8Z" fill="#e4e4e4" /><path d="M5 9 8 10M10 14 15 11" stroke="#555" /></> },
  { name: "Control Panel", art: <><rect x="2.500" y="5" width="15" height="11" fill="#5cc0f5" stroke="#b7e4ff" /><circle cx="7" cy="9" r="2" fill="#ffd44a" /><path d="M12 8H16M12 10H16M5 13.500H9" stroke="#fff" /><path d="M12 13H15" stroke="#f59b23" /></> },
];

function Taskbar() {
  return (
    <nav aria-label="Taskbar" className="flex h-[29px] items-stretch bg-gradient-to-r from-[#050505] via-[#120e04] to-[#060606] font-['Roboto',sans-serif] text-[8px] text-[#e8e8e8]">
      <button type="button" aria-label="Start" className="flex w-[34px] items-center justify-center">
        <svg width="12" height="12" viewBox="0 0 12 12" aria-hidden="true"><path d="M0 2 5 1.200V5.700H0ZM5.700 1 12 0V5.700H5.700ZM0 6.300H5V10.800L0 10ZM5.700 6.300H12V12L5.700 11Z" fill="#fff" /></svg>
      </button>
      <button type="button" aria-label="Search" className="flex w-9 items-center justify-center">
        <svg width="14" height="14" viewBox="0 0 14 14" aria-hidden="true"><circle cx="7" cy="7" r="5" fill="none" stroke="#f2f2f2" strokeWidth="1.600" /></svg>
      </button>
      {apps.map((a) => (
        <button key={a.name} type="button" aria-label={a.name} className={"flex w-9 items-center justify-center border-b-2 " + (a.name === "Rhinoceros" ? "border-[#76b9ed] bg-[#3a3a3a]" : a.name === "Control Panel" ? "border-[#76b9ed]" : "border-transparent")}>
          <svg width="20" height="20" viewBox="0 0 20 20" aria-hidden="true">{a.art}</svg>
        </button>
      ))}
      <div className="ml-auto flex items-center">
        <button type="button" aria-label="Hidden icons" className="mr-2"><svg width="10" height="6" viewBox="0 0 10 6" aria-hidden="true"><path d="M1 5 5 1 9 5" fill="none" stroke="#eee" strokeWidth="1.200" /></svg></button>
        <svg width="13" height="12" viewBox="0 0 13 12" aria-hidden="true"><rect x="1" y="2.500" width="9" height="6" fill="none" stroke="#ddd" /><rect x="3" y="4.500" width="3" height="2" fill="#ddd" /><circle cx="9" cy="8" r="3.300" fill="#23b24b" /><path d="M7.500 8H10.500M9 6.500V10" stroke="#fff" /></svg>
        <svg className="ml-[4px]" width="13" height="12" viewBox="0 0 13 12" aria-hidden="true"><path d="M1 4.500H3.500L6 2V10L3.500 7.500H1Z" fill="none" stroke="#ddd" /><path d="M8 4Q9 6 8 8M9.500 3Q11.500 6 9.500 9M11 2Q14 6 11 10" fill="none" stroke="#ddd" strokeWidth="0.800" /></svg>
        <svg className="ml-[6px]" width="12" height="12" viewBox="0 0 12 12" aria-hidden="true"><path d="M2 10Q3 3 10 2M4 10.500Q5 5 10 4.500M6 10.500Q7 7.500 10 7" fill="none" stroke="#ccc" /><circle cx="9" cy="10" r="1" fill="#eee" /></svg>
        <span className="ml-[6px] w-[18px] text-center text-[9px]">ENG</span>
        <div className="ml-[6px] w-[48px] text-center leading-[13px]"><div>12:39</div><div>12/07/2017</div></div>
        <button type="button" aria-label="Notifications" className="ml-[10px] flex">
          <svg width="22" height="20" viewBox="0 0 22 20" aria-hidden="true">
            <path d="M1 2H13V11H6L3 14V11H1Z" fill="#f2f2f2" /><path d="M3 5H11M3 8H9" stroke="#222" />
            <circle cx="13" cy="13" r="6.500" fill="#444" stroke="#888" />
            <text x="13" y="16" textAnchor="middle" className="fill-white font-['Roboto'] text-[9px]">20</text>
          </svg>
        </button>
        <div className="ml-[6px] h-[29px] w-px bg-[#555]" />
        <div className="w-[2px]" />
      </div>
    </nav>
  );
}

export default function App() {
  return (
    <div className="flex h-screen w-full flex-col overflow-hidden bg-[#dfe2ea] font-['Roboto',sans-serif] text-[8px] leading-none text-[#1c1c1c]">
      <header className="bg-white">
        <div className="flex h-4 items-center gap-[4px] pl-[2px]">
          <svg width="11" height="12" viewBox="0 0 11 12" aria-hidden="true"><rect width="11" height="12" fill="#1c1c1c" /><path d="M1 2 3 4 4 1 5 5 7 6 10 4 9 8 6 11 5 9 2 8Z" fill="#e4e4e4" /></svg>
          <h1 className="font-['Lato',sans-serif] text-[9px]">skewb stikers.3dm (35 KB) - Rhinoceros 5.0 [Full] - [Top]</h1>
          <div className="ml-auto flex items-center gap-6 pr-[14px]">
            <button type="button" aria-label="Minimize"><svg width="9" height="9" viewBox="0 0 9 9" aria-hidden="true"><P d="M1 4.500H8" /></svg></button>
            <button type="button" aria-label="Restore"><svg width="9" height="9" viewBox="0 0 9 9" aria-hidden="true"><P d="M1.500 3H6.500V8H1.500ZM3 3V1.500H8V6.500H6.500" /></svg></button>
            <button type="button" aria-label="Close"><svg width="9" height="9" viewBox="0 0 9 9" aria-hidden="true"><P d="M1 1 8 8M8 1 1 8" /></svg></button>
          </div>
        </div>
        <nav aria-label="Menu" className="flex h-[15px] items-center gap-[9px] pl-[5px] text-[9px]">
          {menus.map((m) => <button key={m} type="button">{m}</button>)}
        </nav>
      </header>
      <section className="flex h-[67px] border-t-2 border-[#dde0e8] pt-px pb-[6px] pl-[5px] font-['Liberation_Sans',sans-serif] text-[9px]">
        <div className="flex flex-1 flex-col bg-white">
          <div className="flex h-[45px] border-b border-[#a9b9cc]">
            <div className="flex-1 pl-px leading-[11px] whitespace-pre">
              <p>Press Enter to accept. FillAngle = 360 ( Items=4  FillAngle  Rotate=Yes  ZOffset=0 ):</p>
              <p>Command: _Save</p>
              <p>File successfully written as C:\Users\user\Desktop\skewb stikers.3dm</p>
              <p>Command: _Lock</p>
            </div>
            <div className="mr-px flex w-[11px] flex-col items-center justify-between bg-[#f0f0f0] py-1">
              <svg width="6" height="5" viewBox="0 0 6 5" aria-hidden="true"><P d="M0.500 4 3 1.500 5.500 4" s="#444" w={1.5} /></svg>
              <div className="mt-[7px] h-3 w-[11px] bg-[#cdcdcd]" />
              <svg width="6" height="5" viewBox="0 0 6 5" aria-hidden="true"><P d="M0.500 1 3 3.500 5.500 1" s="#444" w={1.5} /></svg>
            </div>
          </div>
          <div className="flex flex-1 items-center">
            <label htmlFor="prompt" className="pl-px"><b>Select objects to lock</b>:</label>
            <input id="prompt" className="ml-1 h-full min-w-0 flex-1 outline-none" />
            <svg className="mr-px" width="11" height="12" viewBox="0 0 11 12" aria-hidden="true"><rect x="0.500" y="0.500" width="10" height="11" fill="#f0f0f0" stroke="#bbb" /><P d="M1 6H10" s="#999" /><path d="M3.500 4H7.500L5.500 2ZM3.500 8H7.500L5.500 10Z" fill="#111" /></svg>
          </div>
        </div>
      </section>
      <ToolbarTabs />
      <div className="flex h-[32px] items-start bg-gradient-to-b from-white to-[#dfe2ea] pt-px pl-[5px]">
        <ToolGroup tools={curveA} width="w-[143px]" />
        <div className="ml-1 flex gap-px"><Rule /><ToolGroup tools={curveB} width="w-[21px]" /></div>
        <Rule />
        <ToolGroup tools={curveC} width="ml-[3px] w-[82px]" />
        <div className="flex"><Rule /><ToolGroup tools={curveD} width="w-[226px]" /></div>
        <div className="ml-[3px] flex gap-px"><Rule /><ToolGroup tools={curveE} width="w-[225px]" /></div>
      </div>
      <div className="flex min-h-0 flex-1">
        <aside className="w-[47px] shrink-0 pl-px">
          <div className="mt-px mr-1 h-[2px] w-[39px] bg-[#c9cdd6]" />
          <div className="mt-[2px] grid h-[328px] w-[42px] grid-cols-2 grid-rows-16 items-center">{side.map((t) => <ToolButton key={t.name} tool={t} />)}</div>
        </aside>
        <Viewport />
        <RightPanel />
      </div>
      <div className="flex h-[16px] items-start pl-[48px] font-['Lato',sans-serif] text-[9px]">
        {viewTabs.map(([name, width]) => (
          <button key={name} type="button" className={"h-[15px] rounded-bl-lg border-r border-b border-[#bcc3d2] pl-[2px] text-center " + width + (name === "Top" ? " bg-white" : " bg-[#d3d9e8]")}>{name}</button>
        ))}
        <button type="button" aria-label="New viewport" className="flex h-[15px] w-[21px] items-center justify-center rounded-bl-lg border-r border-b border-[#bcc3d2]">
          <svg width="9" height="9" viewBox="0 0 9 9" aria-hidden="true"><path d="M3.500 1H5.500V3.500H8V5.500H5.500V8H3.500V5.500H1V3.500H3.500Z" fill="#fff" stroke="#777" /></svg>
        </button>
      </div>
      <Osnaps />
      <StatusBar />
      <Taskbar />
    </div>
  );
}
